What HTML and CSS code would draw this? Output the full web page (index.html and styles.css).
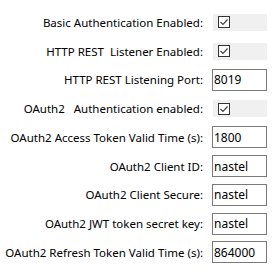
FILE: index.html
```html
<!DOCTYPE html>
<html lang="en">
<head>
    <meta charset="UTF-8">
    <title>Listener Settings</title>
    <link rel="stylesheet" href="styles.css">
</head>
<body>

<div class="settings-form">
    <label class="field-label">Basic Authentication Enabled:</label>
    <div class="check-cell"><span class="check-box"><svg width="10" height="10" viewBox="0 0 10 10"><path d="M1.5 5 L4 7.5 L8.5 2.5" fill="none" stroke="#444" stroke-width="1.2"/></svg></span></div>

    <label class="field-label">HTTP REST&nbsp; Listener Enabled:</label>
    <div class="check-cell"><span class="check-box"><svg width="10" height="10" viewBox="0 0 10 10"><path d="M1.5 5 L4 7.5 L8.5 2.5" fill="none" stroke="#444" stroke-width="1.2"/></svg></span></div>

    <label class="field-label">HTTP REST Listening Port:</label>
    <input class="field-input" type="text" value="8019">

    <label class="field-label">OAuth2&nbsp;&nbsp; Authentication enabled:</label>
    <div class="check-cell"><span class="check-box"><svg width="10" height="10" viewBox="0 0 10 10"><path d="M1.5 5 L4 7.5 L8.5 2.5" fill="none" stroke="#444" stroke-width="1.2"/></svg></span></div>

    <label class="field-label">OAuth2 Access Token Valid Time (s):</label>
    <input class="field-input" type="text" value="1800">

    <label class="field-label">OAuth2 Client ID:</label>
    <input class="field-input" type="text" value="nastel">

    <label class="field-label">OAuth2 Client Secure:</label>
    <input class="field-input" type="text" value="nastel">

    <label class="field-label">OAuth2 JWT token secret key:</label>
    <input class="field-input" type="text" value="nastel">

    <label class="field-label">OAuth2 Refresh Token Valid Time (s):</label>
    <input class="field-input" type="text" value="864000">
</div>

</body>
</html>
```

FILE: styles.css
```css
body {
    font-family: 'Noto Sans', sans-serif;
    font-size: 11.5px;
    color: #000;
    background-color: #fff;
    margin: 0;
    padding: 8px 0 0 0;
}
.settings-form {
    display: grid;
    grid-template-columns: 203px 55px;
    grid-auto-rows: 28.75px;
    column-gap: 9px;
    align-items: center;
}
.field-label {
    text-align: right;
    white-space: nowrap;
}
.field-input {
    box-sizing: border-box;
    width: 55px;
    height: 22px;
    margin: 0;
    padding: 0 0 0 1px;
    font-family: inherit;
    font-size: 12px;
    color: #000;
    border: 1px solid #7a7a7a;
    background-color: #fff;
    outline: none;
}
.check-cell {
    display: flex;
    align-items: center;
    height: 17px;
    margin-left: 1px;
    padding-left: 5px;
    background-color: #f0f0f0;
}
.check-box {
    box-sizing: border-box;
    display: flex;
    align-items: center;
    justify-content: center;
    width: 12px;
    height: 12px;
    border: 1px solid #333;
    background-color: #fff;
}
```
